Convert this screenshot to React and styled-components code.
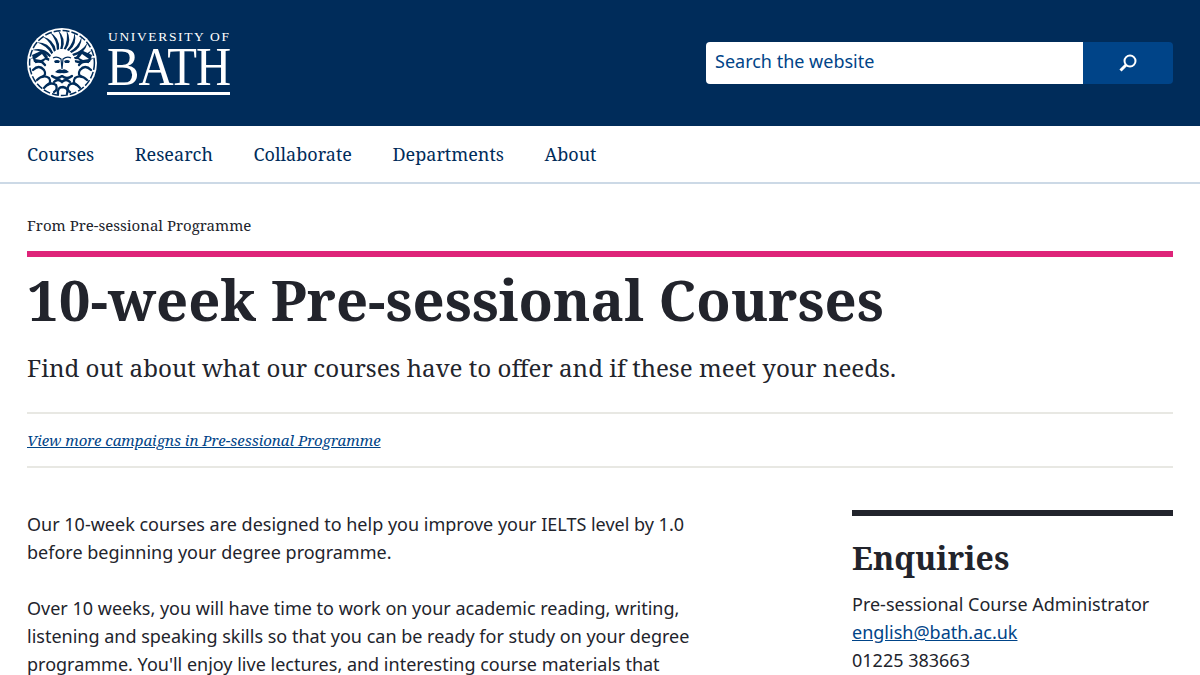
import styled, { createGlobalStyle } from "styled-components"

const GlobalStyle = createGlobalStyle`
    html, body {
        margin: 0;
        padding: 0;
        background: #fff;
        overflow: hidden;
    }
    body {
        font-family: "Noto Sans", sans-serif;
        color: #22242c;
    }
`

const serif = `"Noto Serif", "DejaVu Serif Condensed", "DejaVu Serif", serif`

const Page = styled.div`
    width: 1200px;
    height: 675px;
    overflow: hidden;
`

const Header = styled.header`
    display: flex;
    justify-content: space-between;
    align-items: center;
    height: 126px;
    padding: 0 27px;
    box-sizing: border-box;
    background: #002c5a;
`

const Logo = styled.a`
    display: flex;
    align-items: center;
    gap: 10px;
    color: #fff;
`

const Wordmark = styled.div`
    display: flex;
    flex-direction: column;
    width: 123px;
    margin-top: -2px;
    font-family: "Liberation Serif", serif;
`

const WordTop = styled.span`
    font-size: 13.5px;
    line-height: 14px;
    letter-spacing: 1.65px;
    white-space: nowrap;
    padding-left: 1px;
`

const WordMain = styled.span`
    display: block;
    height: 46px;
    font-size: 54px;
    line-height: 46px;
    letter-spacing: -1px;
    white-space: nowrap;
    transform: scaleX(0.9);
    transform-origin: left center;
`

const WordRule = styled.div`
    height: 3px;
    margin-top: 2px;
    background: #fff;
`

const Search = styled.form`
    display: flex;
    width: 467px;
    height: 42px;
    border-radius: 4px;
    overflow: hidden;
`

const SearchInput = styled.div`
    flex: 1;
    display: flex;
    align-items: center;
    padding: 0 0 4px 9px;
    background: #fff;
    color: #004488;
    font-size: 18px;
`

const SearchButton = styled.button`
    display: flex;
    align-items: center;
    justify-content: center;
    width: 90px;
    border: none;
    padding: 0;
    background: #004488;
`

const Nav = styled.nav`
    display: flex;
    align-items: center;
    gap: 40.6px;
    height: 56px;
    padding: 0 27px;
    border-bottom: 2px solid #ccd9e6;
`

const NavLink = styled.a`
    font-family: ${serif};
    font-size: 18px;
    color: #002c5a;
`

const Main = styled.main`
    padding: 0 27px;
`

const Crumb = styled.div`
    padding-top: 31px;
    height: 36px;
    font-family: ${serif};
    font-size: 15px;
    line-height: 20px;
    color: #22242c;
`

const Title = styled.h1`
    margin: 0;
    border-top: 6px solid #de2479;
    padding-top: 8px;
    font-family: ${serif};
    font-size: 56.2px;
    line-height: 68px;
    font-weight: 700;
    color: #22242c;
`

const Lead = styled.p`
    margin: 17px 0 26px;
    font-family: ${serif};
    font-size: 24.14px;
    line-height: 36px;
`

const MoreRow = styled.div`
    border-top: 2px solid #e8e8e3;
    border-bottom: 2px solid #e8e8e3;
    padding: 16px 0;
    height: 20px;
    line-height: 20px;
`

const MoreLink = styled.a`
    font-family: ${serif};
    font-size: 15px;
    font-style: italic;
    color: #004488;
    text-decoration: underline;
`

const Columns = styled.div`
    display: flex;
    justify-content: space-between;
    padding-top: 42px;
`

const Body = styled.div`
    width: 680px;
`

const Para = styled.p`
    margin: 0 0 28px;
    font-size: 18px;
    line-height: 28px;
`

const Side = styled.aside`
    width: 321px;
    border-top: 6px solid #22242c;
`

const SideTitle = styled.h2`
    margin: 20px 0 10px;
    font-family: ${serif};
    font-size: 32px;
    line-height: 44px;
    font-weight: 700;
    color: #22242c;
`

const SideLine = styled.div`
    font-size: 18px;
    line-height: 28px;
`

const SideLink = styled.a`
    color: #004488;
    text-decoration: underline;
`

const polar = (r, deg) => {
    const a = (deg * Math.PI) / 180
    return `${(35 + r * Math.cos(a)).toFixed(1)} ${(34 + r * Math.sin(a)).toFixed(1)}`
}

// flame-like locks round the head, dark on the white disc
const rayAngles = [-172, -156, -140, -125, -110, -95, -80, -65, -50, -35, -20, -6]
const rayPath = (deg) =>
    `M${polar(13, deg - 3)} Q${polar(22, deg + 7)} ${polar(32, deg - 2)} Q${polar(24, deg + 16)} ${polar(13, deg + 7)} Z`

const beardCurls = [
    "M6 42 Q12 36 17 42 Q20 47 15 49",
    "M10 52 Q16 46 22 50 Q25 55 20 57",
    "M17 60 Q23 53 29 57 Q31 62 27 64",
    "M31 66 Q30 59 36 59 Q42 60 40 66",
    "M64 42 Q58 36 53 42 Q50 47 55 49",
    "M60 52 Q54 46 48 50 Q45 55 50 57",
    "M53 60 Q47 53 42 57 Q39 62 43 64",
    "M25 48 Q30 52 35 48 Q40 52 45 48",
    "M27 54 Q31 50 35 54 Q39 50 43 54",
    "M18 37 Q14 32 9 34",
    "M52 37 Q56 32 61 34",
]

const Medallion = () => (
    <svg width="70" height="70" viewBox="0 0 70 70">
        <circle cx="35" cy="35" r="35" fill="#fff" />
        <circle cx="35" cy="35" r="32.4" fill="none" stroke="#002c5a" strokeWidth="1.5" strokeDasharray="7 2" />
        {rayAngles.map((deg) => (
            <path key={deg} d={rayPath(deg)} fill="#002c5a" />
        ))}
        <g fill="none" stroke="#002c5a" strokeWidth="2.3" strokeLinecap="round">
            {beardCurls.map((d) => (
                <path key={d} d={d} />
            ))}
        </g>
        {/* wings beside the head */}
        <path d="M5 27 L16 22 L21 29 L15 35 L7 34 Z" fill="#002c5a" />
        <path d="M8 31 L15 26 L18 30 L14 32 Z" fill="#fff" />
        <path d="M65 27 L54 22 L49 29 L55 35 L63 34 Z" fill="#002c5a" />
        <path d="M62 31 L55 26 L52 30 L56 32 Z" fill="#fff" />
        {/* the face */}
        <path d="M25 28 Q35 20 45 28 L44 40 Q40 47 35 47 Q30 47 26 40 Z" fill="#fff" />
        <path d="M27 33 Q30 31 33 33 L32 35 L28 35 Z M43 33 Q40 31 37 33 L38 35 L42 35 Z" fill="#002c5a" />
        <path d="M26 30 Q30 28 34 31 L35 41 M44 30 Q40 28 36 31 L35 41" fill="none" stroke="#002c5a" strokeWidth="1.2" />
        <path d="M28 44 Q32 40 35 42 Q38 40 42 44 Q38 46 35 45 Q32 46 28 44 Z" fill="#002c5a" />
    </svg>
)

const SearchIcon = () => (
    <svg width="20" height="20" viewBox="0 0 20 20" fill="none" stroke="#fff">
        <circle cx="12" cy="8" r="5.5" strokeWidth="2" />
        <path d="M8 12 L2.5 17.5" strokeWidth="3" />
    </svg>
)

export default function App() {
    return (
        <Page>
            <GlobalStyle />
            <Header>
                <Logo>
                    <Medallion />
                    <Wordmark>
                        <WordTop>UNIVERSITY OF</WordTop>
                        <WordMain>BATH</WordMain>
                        <WordRule />
                    </Wordmark>
                </Logo>
                <Search>
                    <SearchInput>Search the website</SearchInput>
                    <SearchButton type="button"><SearchIcon /></SearchButton>
                </Search>
            </Header>
            <Nav>
                <NavLink>Courses</NavLink>
                <NavLink>Research</NavLink>
                <NavLink>Collaborate</NavLink>
                <NavLink>Departments</NavLink>
                <NavLink>About</NavLink>
            </Nav>
            <Main>
                <Crumb>From Pre-sessional Programme</Crumb>
                <Title>10-week Pre-sessional Courses</Title>
                <Lead>Find out about what our courses have to offer and if these meet your needs.</Lead>
                <MoreRow>
                    <MoreLink>View more campaigns in Pre-sessional Programme</MoreLink>
                </MoreRow>
                <Columns>
                    <Body>
                        <Para>Our 10-week courses are designed to help you improve your IELTS level by 1.0 before beginning your degree programme.</Para>
                        <Para>Over 10 weeks, you will have time to work on your academic reading, writing, listening and speaking skills so that you can be ready for study on your degree programme. You'll enjoy live lectures, and interesting course materials that</Para>
                    </Body>
                    <Side>
                        <SideTitle>Enquiries</SideTitle>
                        <SideLine>Pre-sessional Course Administrator</SideLine>
                        <SideLine><SideLink>english@bath.ac.uk</SideLink></SideLine>
                        <SideLine>01225 383663</SideLine>
                    </Side>
                </Columns>
            </Main>
        </Page>
    )
}
